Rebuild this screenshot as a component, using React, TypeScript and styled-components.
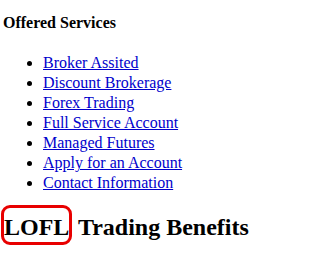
import React from 'react';
import styled, { createGlobalStyle } from 'styled-components';

const GlobalStyle = createGlobalStyle`
  html, body {
    margin: 0;
    padding: 0;
    background: #fff;
  }
  body {
    font-family: "Liberation Serif", "Times New Roman", serif;
    color: #000;
  }
`;

const Page = styled.div`
  padding: 0 3px;
`;

const SectionTitle = styled.h4`
  margin: 13px 0 0;
  font-size: 16px;
  font-weight: bold;
  line-height: 19px;
`;

const ServiceList = styled.ul`
  margin: 21px 0 0;
  padding-left: 40px;
  list-style: disc;
  font-size: 16px;
  line-height: 20px;
`;

const ServiceLink = styled.a`
  color: #0000cc;
  text-decoration: underline;
`;

const Headline = styled.h2`
  margin: 12px 0 0;
  font-size: 24px;
  font-weight: bold;
  line-height: normal;
  white-space: nowrap;
`;

const Highlight = styled.span`
  display: inline-block;
  margin-left: -2px;
  padding: 6px 0 1px;
  border: 3px solid #e80000;
  border-radius: 9px;
`;

const services = [
  'Broker Assited',
  'Discount Brokerage',
  'Forex Trading',
  'Full Service Account',
  'Managed Futures',
  'Apply for an Account',
  'Contact Information',
];

const App: React.FC = () => {
  return (
    <Page>
      <GlobalStyle />
      <SectionTitle>Offered Services</SectionTitle>
      <ServiceList>
        {services.map((name) => (
          <li key={name}>
            <ServiceLink href="#">{name}</ServiceLink>
          </li>
        ))}
      </ServiceList>
      <Headline>
        <Highlight>LOFL</Highlight> Trading Benefits
      </Headline>
    </Page>
  );
};

export default App;
